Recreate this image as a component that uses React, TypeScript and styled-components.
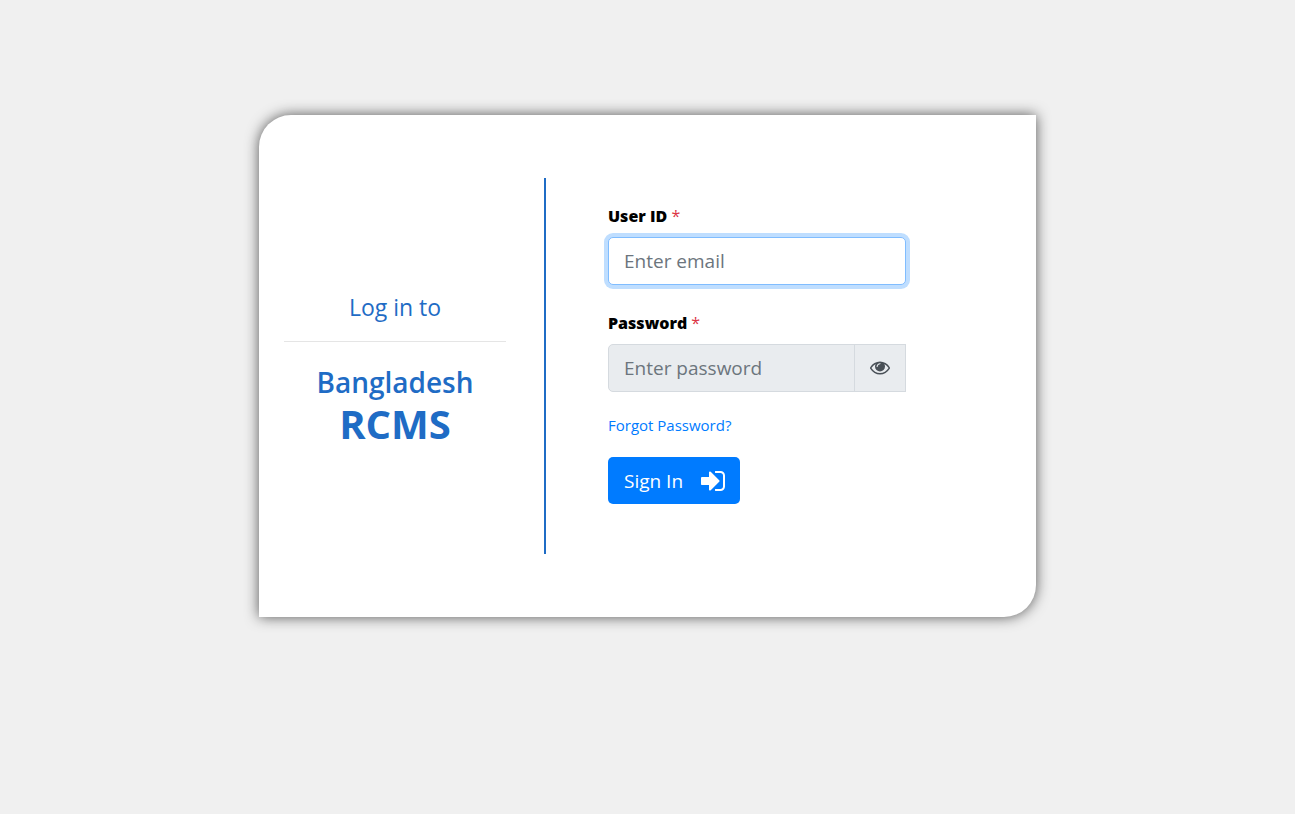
import React from "react";
import styled, { createGlobalStyle } from "styled-components";

const GlobalStyle = createGlobalStyle`
  *, *::before, *::after { box-sizing: border-box; }
  body {
    margin: 0;
    background: #f0f0f0;
    color: #000;
    font-family: "Segoe UI", "Open Sans", "Noto Sans", sans-serif;
    font-size: 16px;
    line-height: 24px;
  }
`;

const Page = styled.main`
  min-height: 100vh;
  padding: 115px 20%;
`;

const Card = styled.section`
  display: grid;
  grid-template-columns: 287px 1fr;
  padding: 63px 0;
  background: #fff;
  border-radius: 32px 0 32px 0;
  box-shadow: 0 0 14px #555;
`;

const Intro = styled.div`
  display: flex;
  flex-direction: column;
  justify-content: center;
  min-height: 376px;
  padding: 4px 38px 0 25px;
  border-right: 2px solid #1f6cc5;
  color: #1f6cc5;
  text-align: center;
`;

const Lead = styled.p`
  margin: 0;
  font-size: 23px;
  line-height: 36px;
`;

const Rule = styled.hr`
  width: 100%;
  height: 1px;
  margin: 16px 0 22px;
  border: 0;
  background: #e5e5e5;
`;

const Country = styled.h2`
  margin: 0;
  font-size: 28px;
  font-weight: 600;
  line-height: 36px;
`;

const System = styled.h1`
  margin: 0;
  font-size: 40px;
  font-weight: 700;
  line-height: 48px;
`;

const Form = styled.form`
  display: flex;
  flex-direction: column;
  align-items: flex-start;
  justify-content: center;
  width: 100%;
  max-width: 360px;
  padding: 0 0 24px 62px;
`;

const Field = styled.div`
  width: 100%;
  margin-bottom: 26px;

  &:last-of-type { margin-bottom: 21px; }
`;

const Label = styled.label`
  display: block;
  margin-bottom: 9px;
  font-size: 16px;
  font-weight: 800;
  line-height: 24px;
`;

const Required = styled.span`
  color: #dc3545;
  font-weight: 400;
`;

const Group = styled.div`
  display: flex;
`;

const Input = styled.input<{ $active?: boolean; $joined?: boolean }>`
  flex: 1;
  min-width: 0;
  width: 100%;
  height: 48px;
  padding: 8px 15px;
  border: 1px solid ${(p) => (p.$active ? "#80bdff" : "#d5dadf")};
  border-radius: ${(p) => (p.$joined ? "5px 0 0 5px" : "5px")};
  background: ${(p) => (p.disabled ? "#e9ecef" : "#fff")};
  box-shadow: ${(p) => (p.$active ? "0 0 0 4px #bfdeff" : "none")};
  color: #495057;
  font-family: inherit;
  font-size: 19px;
  outline: 0;
  &::placeholder { color: #6c757d; opacity: 1; }
`;

const Reveal = styled.button`
  display: flex;
  align-items: center;
  justify-content: center;
  width: 52px;
  margin-left: -1px;
  padding: 0;
  border: 1px solid #d5dadf;
  background: #e9ecef;
  color: #495057;
`;

const Forgot = styled.a`
  margin-bottom: 20px;
  color: #007bff;
  font-size: 15px;
  line-height: 24px;
  text-decoration: none;
`;

const Submit = styled.button`
  display: flex;
  align-items: center;
  gap: 16px;
  height: 47px;
  padding: 0 13px 0 16px;
  border: 0;
  border-radius: 5px;
  background: #007bff;
  color: #fff;
  font-family: inherit;
  font-size: 19px;
`;

const EyeIcon = () => (
  <svg width="20" height="20" viewBox="0 64 1792 1792" fill="currentColor" aria-hidden="true">
    <path d="M1664 960q-152-236-381-353 61 104 61 225 0 185-131.5 316.5t-316.5 131.5-316.5-131.5-131.5-316.5q0-121 61-225-229 117-381 353 133 205 333.5 326.5t434.5 121.5 434.5-121.5 333.5-326.5zm-720-384q0-20-14-34t-34-14q-125 0-214.5 89.5t-89.5 214.5q0 20 14 34t34 14 34-14 14-34q0-86 61-147t147-61q20 0 34-14t14-34zm848 384q0 34-20 69-140 230-376.5 368.5t-499.5 138.5-499.5-139-376.5-368q-20-35-20-69t20-69q140-229 376.5-368t499.5-139 499.5 139 376.5 368q20 35 20 69z" />
  </svg>
);

const SignInIcon = () => (
  <svg width="28" height="28" viewBox="0 0 1792 1792" fill="currentColor" aria-hidden="true">
    <path d="M1312 896q0 26-19 45l-544 544q-19 19-45 19t-45-19-19-45v-288h-448q-26 0-45-19t-19-45v-384q0-26 19-45t45-19h448v-288q0-26 19-45t45-19 45 19l544 544q19 19 19 45zm352-352v704q0 119-84.5 203.5t-203.5 84.5h-320q-13 0-22.5-9.5t-9.5-22.5q0-4-1-20t-.5-26.5 3-23.5 10-19.5 20.5-6.5h320q66 0 113-47t47-113v-704q0-66-47-113t-113-47h-312l-11.5-1-11.5-3-8-5.5-7-9-2-13.5q0-4-1-20t-.5-26.5 3-23.5 10-19.5 20.5-6.5h320q119 0 203.5 84.5t84.5 203.5z" />
  </svg>
);

export default function App() {
  return (
    <Page>
      <GlobalStyle />
      <Card>
        <Intro>
          <Lead>Log in to</Lead>
          <Rule />
          <Country>Bangladesh</Country>
          <System>RCMS</System>
        </Intro>
        <Form onSubmit={(e: React.FormEvent) => e.preventDefault()}>
          <Field>
            <Label htmlFor="user-id">
              User ID <Required>*</Required>
            </Label>
            <Group>
              <Input id="user-id" type="text" placeholder="Enter email" $active />
            </Group>
          </Field>
          <Field>
            <Label htmlFor="password">
              Password <Required>*</Required>
            </Label>
            <Group>
              <Input id="password" type="password" placeholder="Enter password" disabled $joined />
              <Reveal type="button" aria-label="Show password">
                <EyeIcon />
              </Reveal>
            </Group>
          </Field>
          <Forgot href="#forgot">Forgot Password?</Forgot>
          <Submit type="submit">
            Sign In
            <SignInIcon />
          </Submit>
        </Form>
      </Card>
    </Page>
  );
}
